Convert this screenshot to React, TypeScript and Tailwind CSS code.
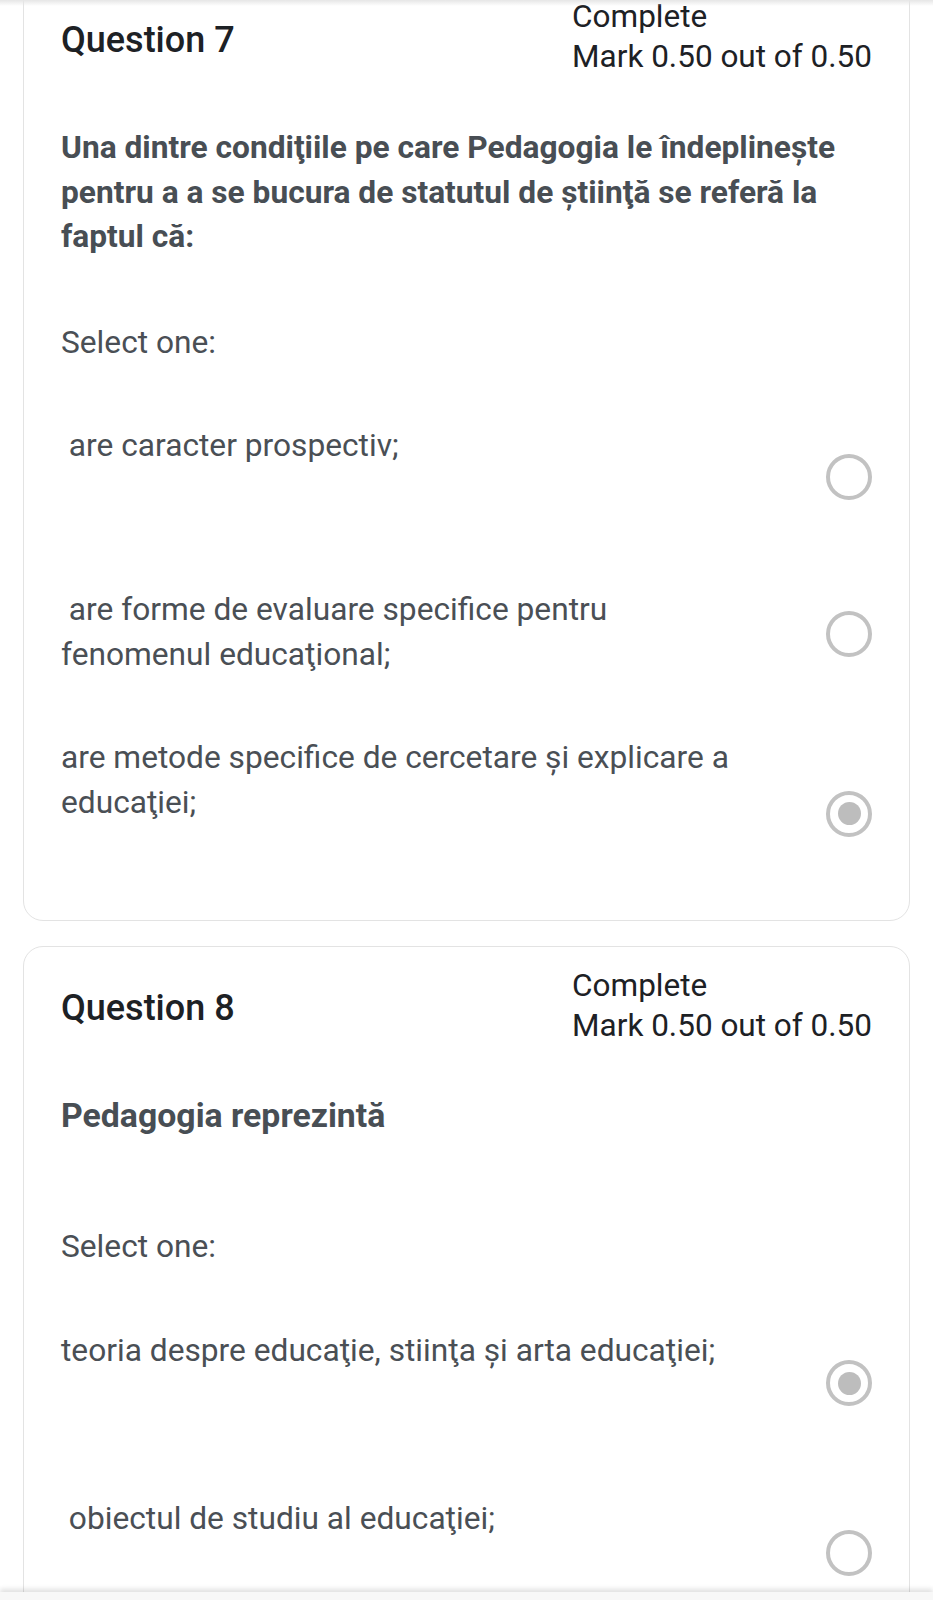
import React from "react";

type Opt = { text: string; checked: boolean; radioTop: number; mt: number };

function Radio({ checked, top }: { checked: boolean; top: number }) {
  return (
    <div
      className="flex h-[46px] w-[46px] shrink-0 items-center justify-center rounded-full border-[4px] border-[#c2c2c2]"
      style={{ marginTop: top }}
    >
      {checked && <div className="h-[23px] w-[23px] rounded-full bg-[#bdbdbd]" />}
    </div>
  );
}

function Card({
  num,
  question,
  qSize,
  qMt,
  selMt,
  options,
  className,
}: {
  num: number;
  question: string[];
  qSize: string;
  qMt: number;
  selMt: number;
  options: Opt[];
  className: string;
}) {
  return (
    <div className={"rounded-[20px] border border-[#e3e3e3] bg-white px-[37px] pt-[18px] " + className}>
      <div className="flex items-center justify-between">
        <div className="pt-[6px] text-[36px] font-medium leading-[44px] text-[#1d2125]">Question {num}</div>
        <div className="pt-[1px] text-[31.5px] leading-[40px] text-[#1d2125]">
          <div>Complete</div>
          <div>Mark 0.50 out of 0.50</div>
        </div>
      </div>
      <div className={"font-bold leading-[44.5px] text-[#484e54] " + qSize} style={{ marginTop: qMt }}>
        {question.map((l, i) => (
          <div key={i}>{l}</div>
        ))}
      </div>
      <div className="text-[31.7px] leading-[45px] text-[#4a4f55]" style={{ marginTop: selMt }}>
        Select one:
      </div>
      {options.map((o, i) => (
        <div key={i} className="flex items-start justify-between" style={{ marginTop: o.mt }}>
          <div className="w-[690px] whitespace-pre-wrap text-[31.7px] leading-[45px] text-[#4a4f55]">{o.text}</div>
          <Radio checked={o.checked} top={o.radioTop} />
        </div>
      ))}
    </div>
  );
}

export default function App() {
  return (
    <div
      className="relative h-[1600px] overflow-hidden bg-white"
      style={{ fontFamily: "Roboto, 'Noto Sans', 'Liberation Sans', sans-serif" }}
    >
      <div className="px-[23px]">
        <Card
          num={7}
          className="mt-[-23px] pb-[83px]"
          qSize="text-[31.7px]"
          question={[
            "Una dintre condiţiile pe care Pedagogia le îndeplinește",
            "pentru a a se bucura de statutul de știinţă se referă la",
            "faptul că:",
          ]}
          qMt={49}
          selMt={60}
          options={[
            { text: "\u00a0are caracter prospectiv;", checked: false, radioTop: 31, mt: 58 },
            {
              text: "\u00a0are forme de evaluare specifice pentru fenomenul educaţional;",
              checked: false,
              radioTop: 24,
              mt: 87,
            },
            {
              text: "are metode specifice de cercetare și explicare a educaţiei;",
              checked: true,
              radioTop: 56,
              mt: 58,
            },
          ]}
        />
        <Card
          num={8}
          className="mt-[25px] pb-[80px]"
          qSize="text-[33.8px]"
          question={["Pedagogia reprezintă"]}
          qMt={48}
          selMt={86}
          options={[
            { text: "teoria despre educaţie, stiinţa și arta educaţiei;", checked: true, radioTop: 32, mt: 59 },
            { text: "\u00a0obiectul de studiu al educaţiei;", checked: false, radioTop: 34, mt: 90 },
          ]}
        />
      </div>
      <div className="absolute left-0 right-0 top-0 h-[6px] bg-gradient-to-b from-[#e6e6e6] to-transparent" />
      <div className="absolute left-0 right-0 top-[1592px] h-[8px] bg-[#f8f8f8] shadow-[0_-3px_5px_rgba(0,0,0,0.12)]" />
    </div>
  );
}
